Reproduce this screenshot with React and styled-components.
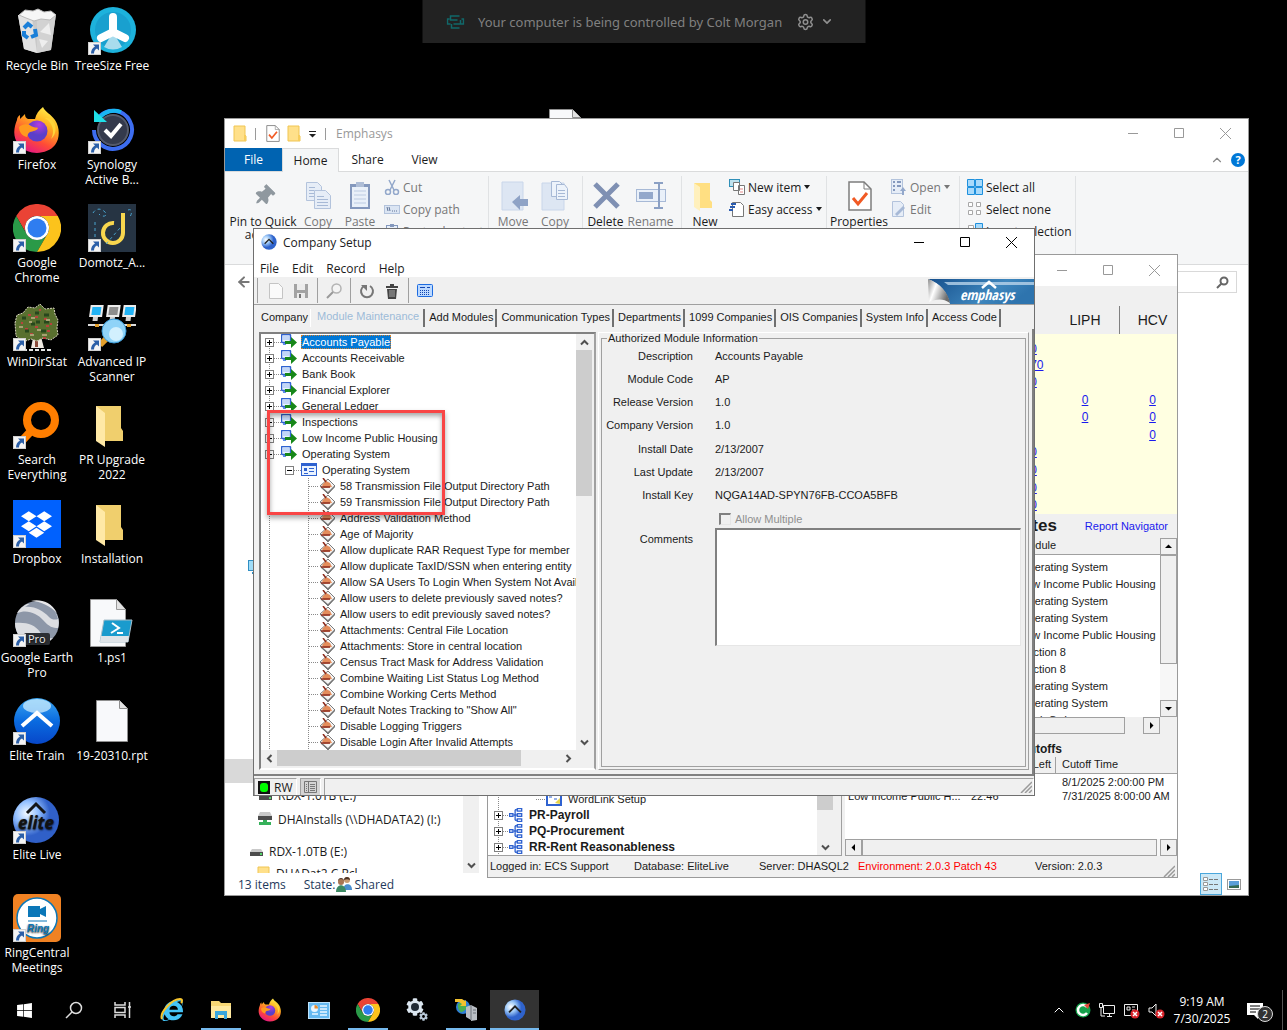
import React from "react";
import styled, { createGlobalStyle, css } from "styled-components";
import { ChevronDown, ChevronUp, Search, Settings, ArrowLeft, RotateCcw } from "lucide-react";
import {
  FaCog,
  FaDropbox,
  FaInternetExplorer,
  FaThumbtack,
  FaWindows,
} from "react-icons/fa";

const ui = `"Open Sans", "Noto Sans", sans-serif`;
const classic = `"Liberation Sans", Arial, sans-serif`;

const colors = {
  face: "#f0f0f0",
  line: "#a0a0a0",
  dark: "#808080",
  link: "#1a1aee",
  accent: "#0078d7",
  ribbon: "#f5f6f7",
};

const dots = "repeating-linear-gradient(to bottom, #8a8a8a 0 1px, transparent 1px 2px)";
const dotsX = "repeating-linear-gradient(to right, #8a8a8a 0 1px, transparent 1px 2px)";

const GlobalStyle = createGlobalStyle`
  * {
    box-sizing: border-box;
  }

  html, body, #root {
    height: 100%;
    margin: 0;
  }

  body {
    background: #000;
    font-family: ${ui};
    font-size: 12px;
    line-height: 15px;
    overflow: hidden;
  }

  svg {
    display: block;
    flex: none;
  }

  button {
    font: inherit;
    color: inherit;
    background: none;
    border: 0;
    padding: 0;
    margin: 0;
  }

  ul, dl, dd {
    margin: 0;
    padding: 0;
    list-style: none;
  }
`;

/* ---------- icons ---------- */

const Shortcut = () => (
  <g>
    <rect x="0.5" y="35.5" width="12" height="12" fill="#f4f4f4" stroke="#d0d0d0" />
    <path d="M5 37.500h6v6l-2-2c-2 1-3 2.500-3 5H3c0-3.500 1.500-5.500 4-7z" fill="#2b5fa8" />
  </g>
);

const Icon = ({ size = 48, box = 48, children }) => (
  <svg width={size} height={size} viewBox={`0 0 ${box} ${box}`} aria-hidden="true">
    {children}
  </svg>
);

const Flame = () => (
  <>
    <defs>
      <linearGradient id="flame" x1="0.8" y1="0" x2="0.3" y2="1">
        <stop offset="0" stopColor="#fff44f" />
        <stop offset="0.35" stopColor="#ffb01f" />
        <stop offset="0.7" stopColor="#ff4b36" />
        <stop offset="1" stopColor="#e31587" />
      </linearGradient>
      <radialGradient id="globe" cx="0.6" cy="0.2">
        <stop offset="0" stopColor="#b53be0" />
        <stop offset="1" stopColor="#5b3fc9" />
      </radialGradient>
    </defs>
    <path
      d="M30 1c2 5 8 7 12 13 5 8 5 18 0 25-8 10-27 11-36 0C-1 31 1 21 4 14c0-2 1-4 3-5v4l5-5c0 3 1 4 3 5h7c1-5 4-9 8-12z"
      fill="url(#flame)"
    />
    <circle cx="24" cy="25" r="10.500" fill="url(#globe)" />
    <path d="M6 21c4-4 10-3 12-1 3 2 6 1 7 2-1 3-5 3-8 4-3 2-2 4-3 5-5-1-8-5-8-10z" fill="#ff9a1f" />
    <path d="M32 12c8 5 10 14 6 21 6-5 6-14 1-19-2-2-5-2-7-2z" fill="#ffd43a" />
  </>
);

const ChromeMark = () => (
  <>
    <path d="M3.200 12A24 24 0 0 1 44.800 12H24A12 12 0 0 0 13.600 30z" fill="#ea4335" />
    <path d="M3.200 12 13.600 30A12 12 0 0 0 34.400 30L24 48A24 24 0 0 1 3.200 12z" fill="#2a9a48" />
    <path d="M44.800 12A24 24 0 0 1 24 48L34.400 30A12 12 0 0 0 24 12z" fill="#fcc31c" />
    <circle cx="24" cy="24" r="12" fill="#fff" />
    <circle cx="24" cy="24" r="9.500" fill="#2f7df0" />
  </>
);

const EliteMark = ({ arrow = "#fff" }) => (
  <>
    <defs>
      <linearGradient id="elite" x1="0" y1="0" x2="0" y2="1">
        <stop offset="0" stopColor="#3aa5f0" />
        <stop offset="0.5" stopColor="#0a6be0" />
        <stop offset="1" stopColor="#0747c9" />
      </linearGradient>
      <radialGradient id="eliteLight" cx="0.3" cy="0.35">
        <stop offset="0" stopColor="#fff" />
        <stop offset="0.5" stopColor="#9cc8f7" />
        <stop offset="1" stopColor="#2f63cc" />
      </radialGradient>
    </defs>
    <circle cx="24" cy="24" r="23" fill={arrow === "#fff" ? "url(#elite)" : "url(#eliteLight)"} />
    {arrow === "#fff" && <ellipse cx="24" cy="9" rx="14" ry="7" fill="#d9f3ff" opacity="0.7" />}
    <path d={arrow === "#fff" ? "M9 29 24 16l15 13" : "M11 29 24 16l13 13"} fill="none" stroke={arrow} strokeWidth="4" />
  </>
);

const FolderMark = () => (
  <>
    <path d="M8 5h25v22l2 3v10H16z" fill="#f0cf6d" />
    <path d="M8 5 17 12v34l-9-6z" fill="#ffe9a6" />
  </>
);

const PageMark = () => (
  <>
    <path d="M8.500 3.500h23l8 8v33h-31z" fill="#f8f9fb" stroke="#8e8e8e" />
    <path d="M31.500 3.500v8h8" fill="#e3e3e3" stroke="#8e8e8e" />
  </>
);

const drawings = {
  bin: (
    <>
      <path d="M5 8l38-1-5 36-14 3-13-4z" fill="#c9c9c9" />
      <path d="M5 8l14 3 5 35-13-4z" fill="#e2e2e2" />
      <path d="M43 7 24 11v35l14-3z" fill="#d2d2d2" />
      <path d="M6 8l6-5 8 1 5-2 6 3 7-1 5 4-6 5-9-1-7 2-8-3z" fill="#f6f6f6" stroke="#b9b9b9" />
      <path d="M27 25l9-9 2 12zM26 32l9 2-6 7z" fill="#eee" />
      <g fill="none" stroke="#1a7fd8" strokeWidth="4">
        <path d="M11 21l4-4 4 3M22 22l1 6-5 2M15 31l-4-3 0-4" />
      </g>
    </>
  ),
  tree: (
    <>
      <circle cx="25" cy="23" r="23" fill="#1db2dc" />
      <circle cx="25" cy="23" r="18" fill="#19a0cf" />
      <path d="M25 25l9 15a18 18 0 0 1-18 0z" fill="#a9dced" />
      <path d="M25 10v15l12 6M25 25l-12 6" stroke="#fff" strokeWidth="8" fill="none" strokeLinecap="round" />
    </>
  ),
  firefox: <Flame />,
  synology: (
    <>
      <circle cx="25" cy="24" r="15" fill="#343a4c" stroke="#555b6c" strokeWidth="2" />
      <path d="M12 10a19 19 0 1 1-6 14" fill="none" stroke="#3d6df0" strokeWidth="4" />
      <path d="M12 11a19 19 0 0 1 21-5" fill="none" stroke="#19b5f2" strokeWidth="4" />
      <path d="M6 4v12h13z" fill="#1fe0e8" />
      <path d="M17 24l6 6 10-12" stroke="#fff" strokeWidth="4" fill="none" />
    </>
  ),
  chrome: <ChromeMark />,
  domotz: (
    <>
      <rect width="49" height="48" fill="#263443" />
      <path d="M35 9v20a10 10 0 1 1-9-10" fill="none" stroke="#f8d64e" strokeWidth="4" />
      <g fill="none" stroke="#4aa4cf" strokeDasharray="3 3">
        <path d="M7 18v20M18 40l14-16M5 9c3-5 8-5 12-1s-3 6-6 2M40 6c5-2 4 5 1 8" />
      </g>
    </>
  ),
  windir: (
    <>
      <path d="M21 30l-3 15h13l-4-15z" fill="#efe9e2" />
      <path d="M22 30v14h3V30z" fill="#8b4a3a" />
      <path
        d="M2 20l2-8 6-2 5-6 7 1 5-4 5 5 9-1 1 6 3 6-1 8 1 7-7 5-8-2-6 3-6-2-8 3-7-6z"
        fill="#59702f"
        stroke="#d8d3c0"
        strokeDasharray="2 1"
      />
      <path d="M8 20h2m5-8h3m-6 14h3m7-12h3m6 2h3m-12 8h3m8-1h3m-19 8h3m14-3h3m-7 7h3M26 7h2m9 14h2" stroke="#b8423c" strokeWidth="2" />
      <path d="M9 15h4m9-5h4m5 2h5m-18 9h4m9-2h5m-24 9h4m12 0h5m-10-9h4" stroke="#27471c" strokeWidth="3" />
      <path d="M6 24h4m6-5h3m5 8h4m5-10h4m-20 15h4m8 0h5M18 15h4" stroke="#a7a173" strokeWidth="2" />
      <path d="M10 47h28" stroke="#e6e6e6" strokeWidth="2" strokeDasharray="4 2" />
    </>
  ),
  ipscan: (
    <>
      <g transform="skewX(-8)">
        {[3, 20, 36].map((x, i) => (
          <g key={x}>
            <rect x={x} y="2" width="13" height="12" fill="#ececec" />
            <rect x={x + 2} y="4" width="9" height="8" fill={i === 1 ? "#8d8d8d" : "#22b3f5"} />
            <path d={`M${x + 4} 14v4h5v-4z`} fill="#d0d0d0" />
          </g>
        ))}
      </g>
      <path d="M0 22h48" stroke="#ddd" strokeWidth="2" />
      <path d="M7 21h4v3H7zM39 21h4v3h-4z" fill="#e4a02c" />
      <path d="M12 42l8-8" stroke="#e4a02c" strokeWidth="6" />
      <circle cx="26" cy="28" r="12" fill="#8fd3f8" stroke="#3b9ad6" />
      <circle cx="28" cy="31" r="7" fill="#d2f0fe" />
    </>
  ),
  everything: (
    <>
      <circle cx="28" cy="19" r="14" fill="none" stroke="#ff7e00" strokeWidth="8" />
      <path d="M19 29 6 43" stroke="#ff7e00" strokeWidth="8" />
    </>
  ),
  folder: <FolderMark />,
  dropbox: (
    <>
      <rect width="48" height="48" fill="#0061fe" />
      <FaDropbox x="8" y="9" size={31} color="#fff" />
    </>
  ),
  earth: (
    <>
      <circle cx="24" cy="24" r="22" fill="#8d97a8" />
      <path d="M4 14c10-4 20 0 26 7s10 8 15 8c2-7 0-12-3-16-6-3-15-8-28-8-4 2-8 5-10 9z" fill="#dcdee2" />
      <path d="M2 24c12-1 20 2 25 9 4 6 9 7 13 6-5 6-14 8-22 6C8 42 2 34 2 24z" fill="#dcdee2" />
      <path d="M12 8c10-1 18 4 24 10 3 3 6 3 9 2-2-9-10-18-21-18-4 1-8 3-12 6z" fill="#8d97a8" />
      <path d="M18 2c10 0 20 6 26 12C38 2 26 0 18 2z" fill="#e8e8ea" />
      <rect x="11" y="34" width="26" height="12" rx="2" fill="#2b2e33" />
      <text x="15" y="44" fontSize="11" fontFamily="Open Sans" fill="#eee">Pro</text>
    </>
  ),
  script: (
    <>
      <path d="M2.500 0.500h26l9 10v37h-35z" fill="#f8f9fb" stroke="#9a9a9a" />
      <path d="M28.500 0.500v10h9" fill="#e3e3e3" stroke="#9a9a9a" />
      <path d="M16 21h28l-4 22H12z" fill="#1a9bcd" stroke="#a9bfca" />
      <path d="M13 37h28l-1 6H12z" fill="#dfe4e8" />
      <path d="M24 24l7 5-8 5m6 0h6" fill="none" stroke="#fff" strokeWidth="2" />
    </>
  ),
  train: <EliteMark />,
  page: <PageMark />,
  live: (
    <>
      <defs>
        <radialGradient id="liveBall" cx="0.3" cy="0.35">
          <stop offset="0" stopColor="#f3faff" />
          <stop offset="0.5" stopColor="#93c0ff" />
          <stop offset="1" stopColor="#3060c8" />
        </radialGradient>
      </defs>
      <circle cx="23" cy="24" r="23" fill="url(#liveBall)" />
      <path d="M14 17l9-9 9 9" fill="none" stroke="#141414" strokeWidth="3" />
      <text x="5" y="33" fontSize="17" fontWeight="700" fontStyle="italic" fontFamily="Open Sans" fill="#111">elite</text>
    </>
  ),
  ring: (
    <>
      <rect width="48" height="48" rx="5" fill="#f08223" />
      <circle cx="24" cy="24" r="20" fill="#fff" stroke="#0b77b8" strokeWidth="1.500" />
      <path d="M15 12h12v3l6-3v11l-6-3v3H15z" fill="#0b77b8" />
      <path d="M15 27h19" stroke="#0b77b8" />
      <text x="14" y="38" fontSize="10" fontWeight="700" fontStyle="italic" fontFamily="Liberation Sans" fill="#0b77b8">Ring</text>
    </>
  ),
};

const SmallFolder = () => (
  <svg width="14" height="17" viewBox="0 0 14 17" aria-hidden="true">
    <path d="M1 1h11v9l1 1v5H1z" fill="#ffe08a" stroke="#f0c552" />
    <path d="M11 10h2v6h-2z" fill="#f7cd5c" />
  </svg>
);

const CheckPage = ({ w = 14, h = 17 }) => (
  <svg width={w} height={h} viewBox="0 0 24 30" aria-hidden="true">
    <path d="M1 1h15l7 7v21H1z" fill="#fff" stroke="#7d7d7d" strokeWidth="1.500" />
    <path d="M16 1v7h7" fill="none" stroke="#7d7d7d" />
    <path d="M5 17l5 6 9-11" fill="none" stroke="#f15a24" strokeWidth="3" />
  </svg>
);

const ribbonIcons = {
  pin: (
    <g transform="rotate(45 16 16)">
      <FaThumbtack x="6" y="5" size={21} color="#8f989f" />
    </g>
  ),
  copy: (
    <g fill="#e6edf7" stroke="#b3c3dc">
      <path d="M4.500 2.500h11l4 4v14h-15z" />
      <path d="M12.500 10.500h11l5 5v13h-16z" />
      <path d="M7 7.500h6m-6 3h5m-5 3h5m-5 3h5M15 16.500h7m-7 3h11m-11 3h11m-11 3h11" fill="none" stroke="#a7b9d6" />
    </g>
  ),
  paste: (
    <g>
      <rect x="6" y="4" width="20" height="25" fill="#8498bd" />
      <rect x="8" y="7" width="16" height="20" fill="#e9f0f9" />
      <path d="M12 2h8v5h-8z" fill="#aebdd6" />
      <path d="M10 11h12m-12 4h12m-12 4h12m-12 4h12" stroke="#bccbe2" />
    </g>
  ),
  move: (
    <g>
      <path d="M5 2h21v28H5z" fill="#dde6f3" stroke="#c9d6ea" />
      <path d="M15 22l8-7v4h8v7h-8v4z" fill="#8fa3c6" />
    </g>
  ),
  copyTo: (
    <g>
      <path d="M3 3h22v27H3z" fill="#dde6f3" stroke="#c9d6ea" />
      <path d="M12.500 1.500h8l3 3v12h-11z" fill="#edf3fb" stroke="#a7b9d6" />
      <path d="M17.500 4.500h8l3 4v11h-11z" fill="#edf3fb" stroke="#a7b9d6" />
      <path d="M19 10.500h7m-7 3h7m-7 3h7" stroke="#a7b9d6" />
    </g>
  ),
  del: <path d="M5 4l23 23M28 4 5 27" stroke="#7f90b3" strokeWidth="5" fill="none" />,
  rename: (
    <g fill="none">
      <rect x="1.500" y="9.500" width="29" height="12" fill="#e9f0f9" stroke="#a7b9d6" />
      <rect x="4" y="12" width="14" height="7" fill="#93a8cb" />
      <path d="M19 3h9M24 3v25M19 28h9" stroke="#8ba0c4" strokeWidth="2" />
    </g>
  ),
  folder: (
    <g>
      <path d="M5 3h16v17l2 2v6H10z" fill="#ffdf82" />
      <path d="M5 3l6 4v24l-6-4z" fill="#fff0bd" />
    </g>
  ),
};

const smallIcons = {
  cut: (
    <g fill="none" stroke="#93a8cb" strokeWidth="1.500">
      <path d="M5 1l5 10M11 1 6 11" />
      <circle cx="4" cy="13" r="2.500" />
      <circle cx="12" cy="13" r="2.500" />
    </g>
  ),
  path: (
    <g>
      <rect x="0.5" y="4.500" width="15" height="8" fill="#dbe5f3" stroke="#b3c3dc" />
      <path d="M3 6l1 4M5 6l1 4m2 0h1m1 0h1m1 0h1" stroke="#5f7397" fill="none" />
    </g>
  ),
  clip: (
    <g>
      <rect x="2.500" y="2.500" width="11" height="13" fill="#e9f0f9" stroke="#8498bd" />
      <path d="M6 1h4v3H6z" fill="#8498bd" />
    </g>
  ),
  item: (
    <g fill="#fff" stroke="#777">
      <rect x="0.500" y="0.500" width="10" height="7" stroke="#2f8fb8" fill="#bfe2ee" />
      <path d="M4.500 3.500h6v8h-6zM9.500 6.500h6v9h-6z" />
      <path d="M11 10h3m-3 3h3" stroke="#e58b8b" />
    </g>
  ),
  access: (
    <g fill="none">
      <path d="M3.500 1.500h8l3 3v11h-11z" fill="#fff" stroke="#777" />
      <path d="M2 3h5M1 6h5M0 9h4" stroke="#2a5cb0" strokeWidth="2" />
    </g>
  ),
  open: (
    <g>
      <rect x="0.500" y="0.500" width="11" height="14" fill="#e6edf7" stroke="#b3c3dc" />
      <path d="M2 3h2m2 0h4M2 7h2m2 0h4M2 11h2" stroke="#8498bd" strokeWidth="2" />
      <path d="M11 16v-4H9l3-4 3 4h-2v4z" fill="#93a8cb" />
    </g>
  ),
  edit: (
    <g>
      <path d="M1.500 0.500h8l3 3v12h-11z" fill="#e6edf7" stroke="#b3c3dc" />
      <path d="M4 13l8-8 2 2-8 8z" fill="#a7b9d6" />
    </g>
  ),
  all: (
    <g fill="#a8dafb" stroke="#1e90dd">
      <path d="M0.500 0.500h7v7h-7zM8.500 0.500h7v7h-7zM0.500 8.500h7v7h-7zM8.500 8.500h7v7h-7z" />
    </g>
  ),
  none: (
    <g fill="#fff" stroke="#a8a8a8">
      <path d="M1.500 1.500h4v4h-4zM9.500 1.500h4v4h-4zM1.500 9.500h4v4h-4zM9.500 9.500h4v4h-4z" />
    </g>
  ),
  invert: (
    <g>
      <path d="M1.500 2.500h5v5h-5z" fill="#fff" stroke="#a8a8a8" />
      <path d="M8.500 0.500h7v7h-7z" fill="#a8dafb" stroke="#1e90dd" />
    </g>
  ),
  drive: (
    <g>
      <path d="M4 6h9l2 3H2z" fill="#c9c9c9" />
      <rect x="2" y="9" width="13" height="4" fill="#4c4c4c" />
      <rect x="12" y="10" width="2" height="2" fill="#54d36a" />
    </g>
  ),
  netDrive: (
    <g>
      <path d="M3 1h10l2 4H1z" fill="#c9c9c9" />
      <rect x="1" y="5" width="14" height="4" fill="#4c4c4c" />
      <path d="M6 9h4v2h4v3H2v-3h4z" fill="#35b15a" />
    </g>
  ),
  pc: (
    <g>
      <rect x="0.500" y="1.500" width="15" height="10" fill="#9fdcf8" stroke="#2f8fc4" />
      <path d="M4 14h8" stroke="#2f8fc4" strokeWidth="2" />
    </g>
  ),
  module: (
    <g>
      <rect x="0.500" y="0.500" width="9" height="8" rx="1" fill="#e8f2ff" stroke="#2f62d0" strokeWidth="1.500" />
      <path d="M2 3h6M2 5h6" stroke="#9dbcf0" />
      <path d="M2 9h3v2H2z" fill="#5d8be8" />
      <path d="M4 7h6V3l6 5.500-6 5.500v-4H4z" fill="#17871a" />
    </g>
  ),
  form: (
    <g>
      <rect x="0.500" y="1.500" width="15" height="12" fill="#eaf3ff" stroke="#2f62d0" />
      <path d="M1 3h14" stroke="#2f62d0" strokeWidth="2" />
      <path d="M3 6h3v3H3z" fill="#2f62d0" />
      <path d="M8 6.500h5M8 9.500h5M3 11.500h4" stroke="#2f62d0" />
    </g>
  ),
  pref: (
    <g>
      <path d="M1 8l8-7 7 7-7 8z" fill="#f5f5f5" stroke="#7b7b7b" />
      <path d="M2 9l7 6 7-7" stroke="#777" strokeWidth="1.500" fill="none" />
      <path d="M3 7l4-4 4 2 2 4-8 1z" fill="#e38d5c" />
      <path d="M4 0l3 4M2 9h9" stroke="#8d2b1c" strokeWidth="1.500" />
    </g>
  ),
  nodes: (
    <g fill="#dbe6fb" stroke="#2f62d0" strokeWidth="1.500">
      <path d="M0.500 6.500h4v3h-4zM9.500 0.500h5v3h-5zM9.500 6.500h5v3h-5zM9.500 12.500h5v3h-5z" />
      <path d="M5 8h4M7 2v12M7 2h2M7 14h2" fill="none" />
    </g>
  ),
  link: (
    <g>
      <rect x="1" y="1" width="14" height="13" fill="#fff" stroke="#2f62d0" strokeWidth="2" />
      <path d="M9 12l5-5v6z" fill="#e8d44a" />
      <path d="M3 6h3m2 2h3" stroke="#2f62d0" />
    </g>
  ),
};

const Small = ({ name, size = 16 }) => (
  <Icon size={size} box={16}>
    {smallIcons[name]}
  </Icon>
);

/* ---------- desktop ---------- */

const Screen = styled.div`
  height: 100%;
  display: flex;
  flex-direction: column;
  background: #000;
`;

const Desktop = styled.main`
  flex: 1;
  min-height: 0;
  position: relative;
  overflow: hidden;
`;

const IconGrid = styled.div`
  height: 100%;
  padding-bottom: 4px;
  display: grid;
  grid-template-columns: 74px 76px;
  grid-template-rows: repeat(10, 1fr);
  grid-auto-flow: column;
`;

const DesktopIcon = styled.button`
  display: flex;
  flex-direction: column;
  align-items: center;
  justify-content: flex-start;
  gap: 3px;
  padding-top: 7px;
  color: #fff;
  text-align: center;
  text-shadow: 0 1px 2px #000;
  min-height: 0;
  white-space: pre;
`;

const desktopIcons = [
  ["bin", "Recycle Bin", false],
  ["firefox", "Firefox", true],
  ["chrome", "Google\nChrome", true],
  ["windir", "WinDirStat", true],
  ["everything", "Search\nEverything", true],
  ["dropbox", "Dropbox", true],
  ["earth", "Google Earth\nPro", true],
  ["train", "Elite Train", true],
  ["live", "Elite Live", true],
  ["ring", "RingCentral\nMeetings", true],
  ["tree", "TreeSize Free", true],
  ["synology", "Synology\nActive B...", true],
  ["domotz", "Domotz_A...", true],
  ["ipscan", "Advanced IP\nScanner", true],
  ["folder", "PR Upgrade\n2022", false],
  ["folder", "Installation", false],
  ["script", "1.ps1", false],
  ["page", "19-20310.rpt", false],
];

const LooseFile = styled.div`
  position: absolute;
  left: 541px;
  top: 106px;
`;

const Banner = styled.div`
  position: absolute;
  top: 0;
  left: 50%;
  transform: translateX(-50%);
  width: 443px;
  height: 43px;
  display: flex;
  align-items: center;
  gap: 14px;
  padding: 0 24px;
  background: #222;
  color: #808080;
  font-family: "Noto Sans", sans-serif;
  font-size: 13px;
  line-height: 20px;
  white-space: nowrap;
`;

const BannerTools = styled.button`
  display: flex;
  align-items: center;
  gap: 6px;
  color: #8f8f8f;
`;

const Marker = styled.div`
  position: absolute;
  left: 267px;
  top: 410px;
  width: 178px;
  height: 105px;
  border: 3px solid #f94545;
  box-shadow: 0 3px 5px rgba(0, 0, 0, 0.35), inset 0 3px 5px rgba(0, 0, 0, 0.35);
`;

/* ---------- windows ---------- */

const Window = styled.section`
  position: absolute;
  left: ${(p) => p.$x}px;
  top: ${(p) => p.$y}px;
  width: ${(p) => p.$w}px;
  height: ${(p) => p.$h}px;
  display: flex;
  flex-direction: column;
  background: #fff;
  border: 1px solid ${(p) => p.$edge || "#9a9a9a"};
  color: #1b1b1b;
`;

const TitleBar = styled.header`
  height: ${(p) => p.$h || 26}px;
  flex: none;
  display: flex;
  align-items: center;
  gap: 6px;
  padding-left: 7px;
`;

const Controls = styled.div`
  display: flex;
  margin-left: auto;
  align-self: stretch;
  color: ${(p) => (p.$dim ? "#999" : "#000")};

  button {
    width: 46px;
    display: flex;
    align-items: center;
    justify-content: center;
  }
`;

const WindowControls = ({ dim }) => (
  <Controls $dim={dim}>
    <button aria-label="Minimize">
      <svg width="11" height="11"><path d="M0 5.500h10" stroke="currentColor" /></svg>
    </button>
    <button aria-label="Maximize">
      <svg width="11" height="11"><path d="M0.500 0.500h9v9h-9z" fill="none" stroke="currentColor" /></svg>
    </button>
    <button aria-label="Close">
      <svg width="11" height="11"><path d="M0 0l11 11M11 0 0 11" stroke="currentColor" /></svg>
    </button>
  </Controls>
);

/* explorer */

const Rule = styled.span`
  width: 1px;
  height: 12px;
  background: #9a9a9a;
  margin: 0 3px 0 1px;
`;

const Caret = styled.span`
  border: 3px solid transparent;
  border-top: 4px solid currentColor;
  border-bottom: 0;
`;

const QuickBar = styled.div`
  display: flex;
  align-items: center;
  gap: 7px;
  padding-left: 1px;
  color: #999;
`;

const RibbonTabs = styled.nav`
  height: 24px;
  flex: none;
  display: flex;
  align-items: stretch;
  border-bottom: 1px solid #dadbdc;
`;

const RibbonTab = styled.button`
  width: 57px;
  ${(p) => p.$file && css`
    background: #0063b1;
    color: #fff;
  `}
  ${(p) => p.$active && css`
    background: ${colors.ribbon};
    border: 1px solid #dadbdc;
    border-bottom: 0;
    margin-bottom: -1px;
  `}
`;

const HelpCorner = styled.div`
  margin-left: auto;
  display: flex;
  align-items: center;
  gap: 7px;
  padding-right: 3px;
  color: #888;
`;

const Help = styled.button`
  width: 14px;
  height: 14px;
  border-radius: 50%;
  background: ${colors.accent};
  color: #fff;
  font-size: 11px;
  font-weight: 700;
  line-height: 14px;
`;

const Ribbon = styled.div`
  height: 93px;
  flex: none;
  display: flex;
  background: ${colors.ribbon};
  border-bottom: 1px solid #dadbdc;
`;

const Group = styled.div`
  width: ${(p) => p.$w}px;
  margin: 4px 0 3px;
  padding-left: ${(p) => p.$pad}px;
  border-right: 1px solid #e0e2e4;
  display: flex;
  overflow: hidden;
`;

const Big = styled.button`
  width: ${(p) => p.$w || 42}px;
  flex: none;
  display: flex;
  flex-direction: column;
  align-items: center;
  gap: 3px;
  padding-top: 4px;
  line-height: 13px;
  color: ${(p) => (p.$off ? "#777" : "#1b1b1b")};
  white-space: pre;
`;

const SmallStack = styled.div`
  display: flex;
  flex-direction: column;
  padding-left: 3px;
`;

const SmallButton = styled.button`
  height: 22px;
  display: flex;
  align-items: center;
  gap: 3px;
  white-space: nowrap;
  color: ${(p) => (p.$off ? "#777" : "#1b1b1b")};
`;

const AddressRow = styled.div`
  height: 34px;
  flex: none;
  display: flex;
  align-items: center;
  justify-content: space-between;
  padding: 0 11px;
  color: #777;
`;

const SearchBox = styled.div`
  width: 220px;
  height: 22px;
  border: 1px solid #d9d9d9;
  display: flex;
  align-items: center;
  padding-right: 7px;

  input {
    flex: 1;
    border: 0;
    outline: 0;
    min-width: 0;
  }
`;

const NavPane = styled.div`
  flex: 1;
  min-height: 0;
  width: 254px;
  display: flex;
`;

const NavList = styled.ul`
  flex: 1;
  overflow: hidden;
  display: flex;
  flex-direction: column;
  justify-content: flex-end;
`;

const NavItem = styled.li`
  height: 24px;
  flex: none;
  display: flex;
  align-items: center;
  gap: 5px;
  padding-left: ${(p) => (p.$root ? 23 : 32)}px;
  margin-bottom: ${(p) => p.$after || 0}px;
  background: ${(p) => (p.$selected ? "#d9d9d9" : "none")};
  ${(p) => p.$cut && css`
    height: 10px;
    align-items: flex-start;
    padding-top: 3px;
    overflow: hidden;
  `}
`;

const ExplorerStatus = styled.footer`
  height: 22px;
  flex: none;
  display: flex;
  align-items: center;
  padding-left: 13px;
  color: #1e395b;

  span {
    margin-right: 18px;
  }
`;

const Shared = styled.div`
  display: flex;
  align-items: center;
  gap: 1px;
`;

const ViewButton = styled.button`
  width: ${(p) => (p.$on ? 22 : 24)}px;
  height: 22px;
  display: flex;
  align-items: center;
  justify-content: center;
  margin-left: ${(p) => (p.$on ? "auto" : "0")};
  margin-right: ${(p) => (p.$on ? 0 : 2)}px;
  background: ${(p) => (p.$on ? "#cce8f6" : "none")};
  border: ${(p) => (p.$on ? "1px solid #4aa7dc" : 0)};
`;

const Explorer = () => (
  <Window $x={224} $y={118} $w={1025} $h={778}>
    <TitleBar $h={29}>
      <QuickBar>
        <SmallFolder />
        <Rule />
        <CheckPage />
        <SmallFolder />
        <svg width="9" height="8"><path d="M1 1.500h7" stroke="#222" /><path d="M1 4h7L4.500 7.500z" fill="#222" /></svg>
        <Rule />
        Emphasys
      </QuickBar>
      <WindowControls dim />
    </TitleBar>
    <RibbonTabs>
      <RibbonTab $file>File</RibbonTab>
      <RibbonTab $active>Home</RibbonTab>
      <RibbonTab>Share</RibbonTab>
      <RibbonTab>View</RibbonTab>
      <HelpCorner>
        <ChevronUp size={14} strokeWidth={2} />
        <Help aria-label="Help">?</Help>
      </HelpCorner>
    </RibbonTabs>
    <Ribbon>
      <Group $w={264} $pad={4}>
        <Big $w={68}><Icon size={32} box={32}>{ribbonIcons.pin}</Icon>{"Pin to Quick\naccess"}</Big>
        <Big $off><Icon size={32} box={32}>{ribbonIcons.copy}</Icon>Copy</Big>
        <Big $off><Icon size={32} box={32}>{ribbonIcons.paste}</Icon>Paste</Big>
        <SmallStack>
          <SmallButton $off><Small name="cut" />Cut</SmallButton>
          <SmallButton $off><Small name="path" />Copy path</SmallButton>
          <SmallButton $off><Small name="clip" />Paste shortcut</SmallButton>
        </SmallStack>
      </Group>
      <Group $w={94} $pad={3}>
        <Big $off><Icon size={32} box={32}>{ribbonIcons.move}</Icon>Move</Big>
        <Big $off><Icon size={32} box={32}>{ribbonIcons.copyTo}</Icon>Copy</Big>
      </Group>
      <Group $w={99} $pad={0}>
        <Big $w={45}><Icon size={32} box={32}>{ribbonIcons.del}</Icon>Delete</Big>
        <Big $w={45} $off><Icon size={32} box={32}>{ribbonIcons.rename}</Icon>Rename</Big>
      </Group>
      <Group $w={145} $pad={2}>
        <Big><Icon size={32} box={32}>{ribbonIcons.folder}</Icon>New</Big>
        <SmallStack>
          <SmallButton><Small name="item" />New item <Caret /></SmallButton>
          <SmallButton><Small name="access" />Easy access <Caret /></SmallButton>
        </SmallStack>
      </Group>
      <Group $w={133} $pad={3}>
        <Big $w={58}><Icon size={32} box={32}><svg x="5" y="1" width="24" height="30"><CheckPage w={24} h={30} /></svg></Icon>Properties</Big>
        <SmallStack>
          <SmallButton $off><Small name="open" />Open <Caret /></SmallButton>
          <SmallButton $off><Small name="edit" />Edit</SmallButton>
        </SmallStack>
      </Group>
      <Group $w={116} $pad={4}>
        <SmallStack>
          <SmallButton><Small name="all" />Select all</SmallButton>
          <SmallButton><Small name="none" />Select none</SmallButton>
          <SmallButton><Small name="invert" />Invert selection</SmallButton>
        </SmallStack>
      </Group>
    </Ribbon>
    <AddressRow>
      <ArrowLeft size={16} strokeWidth={3} />
      <SearchBox>
        <input aria-label="Search Emphasys" />
        <svg width="13" height="13" aria-hidden="true">
          <circle cx="8" cy="5" r="3.500" fill="none" stroke="#666" strokeWidth="2" />
          <path d="M5.500 7.500 1 12" stroke="#666" strokeWidth="2" />
        </svg>
      </SearchBox>
    </AddressRow>
    <NavPane>
      <NavList>
        <NavItem $root $after={180}><Small name="pc" /></NavItem>
        <NavItem $selected />
        <NavItem><Small name="drive" />RDX-1.0TB (E:)</NavItem>
        <NavItem $after={8}><Small name="netDrive" />DHAInstalls (\\DHADATA2) (I:)</NavItem>
        <NavItem $root><Small name="drive" />RDX-1.0TB (E:)</NavItem>
        <NavItem $cut><SmallFolder />DHADat2 C Rcl</NavItem>
      </NavList>
      <VBar />
    </NavPane>
    <ExplorerStatus>
      <span>13 items</span>
      <Shared>
        State:
        <svg width="17" height="16" viewBox="0 0 17 16" aria-hidden="true">
          <circle cx="11" cy="4" r="3" fill="#c79a72" />
          <path d="M7 14c0-7 9-8 9 0z" fill="#4b8fd0" />
          <path d="M8 4c0-4 6-4 6 0-2-1-4-1-6 0zM2 5c0-4 6-4 6 0-2-1-4-1-6 0z" fill="#4a3225" />
          <circle cx="5" cy="6" r="3" fill="#a87654" />
          <path d="M0 16c0-9 10-9 10 0z" fill="#3d8a63" />
        </svg>
        Shared
      </Shared>
      <ViewButton $on aria-label="Details">
        <svg width="16" height="14">
          <path d="M0.500 0.500h4v3h-4zM0.500 5.500h4v3h-4zM0.500 10.500h4v3h-4z" fill="#fff" stroke="#999" />
          <path d="M6 2.500h4m1 0h4M6 7.500h4m1 0h4M6 12.500h4m1 0h4" stroke="#777" />
        </svg>
      </ViewButton>
      <ViewButton aria-label="Large icons">
        <svg width="14" height="11">
          <rect x="0.500" y="0.500" width="13" height="10" fill="#fff" stroke="#999" />
          <rect x="2" y="2" width="10" height="7" fill="#5b9fd8" />
          <path d="M2 7l10-1v3H2z" fill="#356b52" />
        </svg>
      </ViewButton>
    </ExplorerStatus>
  </Window>
);

/* scroll bars */

const VTrack = styled.div`
  width: 16px;
  flex: none;
  display: flex;
  flex-direction: column;
  justify-content: space-between;
  align-items: center;
  background: ${colors.face};
`;

const VThumb = styled.div`
  width: 16px;
  height: ${(p) => p.$h}px;
  background: #cdcdcd;
  margin-bottom: auto;
`;

const HTrack = styled.div`
  height: 16px;
  flex: none;
  display: flex;
  align-items: center;
  background: ${colors.face};
`;

const HThumb = styled.div`
  width: ${(p) => p.$w}px;
  height: 16px;
  background: #cdcdcd;
  margin-right: auto;
`;

const ArrowBox = styled.button`
  width: 16px;
  height: 16px;
  flex: none;
  display: flex;
  align-items: center;
  justify-content: center;
`;

const turns = { up: 180, down: 0, left: 90, right: 270 };

const Arrow = ({ to }) => (
  <ArrowBox aria-label={`Scroll ${to}`}>
    <svg width="9" height="9" viewBox="0 0 9 9">
      <path d="M1 2.500l3.500 3.500L8 2.500" transform={`rotate(${turns[to]} 4.500 4.500)`} fill="none" stroke="#505050" strokeWidth="2" />
    </svg>
  </ArrowBox>
);

const VBar = ({ thumb }) => (
  <VTrack>
    {thumb ? <Arrow to="up" /> : <span />}
    {thumb ? <VThumb $h={thumb} /> : null}
    <Arrow to="down" />
  </VTrack>
);

const FlatButton = styled.button`
  width: 17px;
  height: 17px;
  flex: none;
  border: 1px solid ${colors.line};
  background: ${colors.face};
  display: flex;
  align-items: center;
  justify-content: center;
`;

const Flat = ({ to }) => (
  <FlatButton aria-label={`Scroll ${to}`}>
    <svg width="7" height="7" viewBox="0 0 7 7">
      <path d="M0 2h7L3.500 5.500z" transform={`rotate(${turns[to]} 3.500 3.500)`} fill="#000" />
    </svg>
  </FlatButton>
);

const FlatTrack = styled.div`
  flex: none;
  display: flex;
  flex-direction: ${(p) => (p.$vertical ? "column" : "row")};
  padding-right: ${(p) => p.$end || 0}px;
  background: ${(p) => (p.$end ? colors.face : "#f7f7f7")};
`;

const FlatThumb = styled.div`
  border: 1px solid ${colors.line};
  background: ${colors.face};
  ${(p) => (p.$h ? `height: ${p.$h}px; margin-bottom: auto;` : `margin-right: ${p.$rest}px; flex: 1;`)}
`;

/* elite main window */

const Split = styled.div`
  flex: 1;
  min-height: 0;
  display: flex;
  background: ${colors.face};
  font-family: ${classic};
  font-size: 11px;
  line-height: 14px;
`;

const LeftTree = styled.div`
  width: 354px;
  flex: none;
  margin-right: 3px;
  padding-right: 8px;
  display: flex;
  border: 1px solid ${colors.line};
  border-left: 0;
`;

const Branches = styled.ul`
  flex: 1;
  background: ${dots} 10px 0 / 1px 100% no-repeat #fff;
  display: flex;
  flex-direction: column;
  justify-content: flex-end;
`;

const Branch = styled.li`
  height: 16px;
  display: flex;
  align-items: center;
  padding-left: ${(p) => (p.$deep ? 48 : 6)}px;
  font-size: ${(p) => (p.$deep ? 11 : 12)}px;
  font-weight: ${(p) => (p.$deep ? 400 : 700)};
`;

const PlusBox = styled.span`
  width: 9px;
  height: 9px;
  flex: none;
  border: 1px solid #808080;
  background:
    linear-gradient(#000, #000) center / 5px 1px no-repeat,
    ${(p) => (p.$open ? "" : "linear-gradient(#000, #000) center / 1px 5px no-repeat,")}
    linear-gradient(#fff, #fff);
`;

const Dash = styled.span`
  width: ${(p) => p.$w}px;
  height: 1px;
  flex: none;
  background: ${dotsX};
`;

const BranchLabel = styled.span`
  margin-left: 6px;
`;

const Right = styled.div`
  flex: 1;
  min-width: 0;
  display: flex;
  flex-direction: column;
`;

const Counts = styled.table`
  border-collapse: collapse;
  width: 100%;
  table-layout: fixed;
  text-align: center;
  background: #ffffe1;
  height: 228px;
  font-size: 12px;

  th {
    height: 48px;
    padding: 20px 0 0;
    font-weight: 400;
    font-size: 14px;
    background: ${colors.face};
  }

  th:last-child {
    background: linear-gradient(#808080, #808080) 0 20px / 1px 28px no-repeat ${colors.face};
  }

  td {
    height: 17px;
    padding: 0;
  }

  td:last-child, th:last-child {
    padding-left: 9px;
  }

  tbody tr:first-child td {
    height: 21px;
    vertical-align: bottom;
  }

  a {
    color: ${colors.link};
  }
`;

const NotesHead = styled.div`
  height: 24px;
  flex: none;
  display: flex;
  align-items: center;
  justify-content: flex-end;
  gap: 28px;
  padding-right: 9px;

  h2 {
    margin: 0;
    font-size: 17px;
  }

  a {
    color: ${colors.link};
    text-decoration: none;
  }
`;

const NotesList = styled.div`
  height: 179px;
  flex: none;
  display: flex;
  overflow: hidden;
  background: #fff;
`;

const Rows = styled.table`
  border-collapse: collapse;
  width: 100%;
  table-layout: fixed;

  th {
    height: 16px;
    padding: 0;
    text-align: left;
    font-weight: 400;
    line-height: 13px;
    background: ${colors.face};
    border-bottom: 1px solid ${colors.line};
  }

  td {
    height: ${(p) => p.$row}px;
    padding: 0;
    white-space: nowrap;
  }

  tbody::before {
    content: "";
    display: block;
    height: ${(p) => p.$lead}px;
  }
`;

const LeftHead = styled.th`
  && {
    padding-right: 11px;
    text-align: right;
    background: linear-gradient(${colors.line}, ${colors.line}) calc(100% - 6px) 0 / 1px 100% no-repeat ${colors.face};
  }
`;

const TableClip = styled.div`
  flex: 1;
  min-width: 0;
  min-height: 0;
  overflow: hidden;
  background: #fff;
`;

const CutTitle = styled.h3`
  margin: 0;
  height: 23px;
  flex: none;
  padding: 8px 0 0 175px;
  font-size: 12px;
  line-height: 14px;
`;

const EliteStatus = styled.footer`
  height: 21px;
  flex: none;
  display: grid;
  grid-template-columns: 144px 125px 99px 177px 1fr 14px;
  align-items: center;
  padding-left: 2px;
  background: ${colors.face};
  font-family: ${classic};
  font-size: 11px;
  white-space: nowrap;

  svg {
    align-self: end;
  }
`;

const Alert = styled.span`
  color: #f00;
`;

const Grip = () => (
  <svg width="12" height="12" aria-hidden="true">
    <path d="M1 12 12 1M5 12l7-7M9 12l3-3" stroke="#9a9a9a" strokeWidth="1.500" fill="none" />
  </svg>
);

const counts = [
  ["0"], ["170"], ["0"], ["", "0", "0"], ["", "0", "0"], ["", "", "0"], ["0"], ["0"], ["0"], ["0"],
];

const noteModules = [
  "Operating System",
  "Low Income Public Housing",
  "Operating System",
  "Operating System",
  "Low Income Public Housing",
  "Section 8",
  "Section 8",
  "Operating System",
  "Operating System",
  "Work Orders",
];

const Elite = () => (
  <Window $x={487} $y={254} $w={691} $h={624}>
    <TitleBar $h={31}>
      <WindowControls dim />
    </TitleBar>
    <Split>
      <LeftTree>
        <Branches>
          <Branch $deep><Dash $w={10} /><Small name="link" /><BranchLabel>WordLink Setup</BranchLabel></Branch>
          {["PR-Payroll", "PQ-Procurement", "RR-Rent Reasonableness"].map((name) => (
            <Branch key={name}>
              <PlusBox /><Dash $w={6} /><Small name="nodes" size={14} /><BranchLabel>{name}</BranchLabel>
            </Branch>
          ))}
        </Branches>
        <VBar thumb={507} />
      </LeftTree>
      <Right>
        <Counts>
          <colgroup>
            <col /><col style={{ width: 35 }} /><col style={{ width: 68 }} /><col style={{ width: 58 }} />
          </colgroup>
          <thead>
            <tr><th /><th /><th>LIPH</th><th>HCV</th></tr>
          </thead>
          <tbody>
            {counts.map((row, i) => (
              <tr key={i}>
                <td />
                {[0, 1, 2].map((n) => (
                  <td key={n}>{row[n] ? <a href="#count">{row[n]}</a> : null}</td>
                ))}
              </tr>
            ))}
          </tbody>
        </Counts>
        <NotesHead>
          <h2>Notes</h2>
          <a href="#reports">Report Navigator</a>
        </NotesHead>
        <NotesList>
          <TableClip>
            <Rows $row={17} $lead={4}>
              <colgroup><col style={{ width: 175 }} /><col /></colgroup>
              <thead><tr><th /><th>Module</th></tr></thead>
              <tbody>
                {noteModules.map((name, i) => (
                  <tr key={i}><td /><td>{name}</td></tr>
                ))}
              </tbody>
            </Rows>
          </TableClip>
          <FlatTrack $vertical>
            <Flat to="up" />
            <FlatThumb $h={109} />
            <Flat to="down" />
          </FlatTrack>
        </NotesList>
        <FlatTrack $end={17}>
          <FlatThumb $rest={18} />
          <Flat to="right" />
        </FlatTrack>
        <CutTitle>Cutoffs</CutTitle>
        <TableClip>
          <Rows $row={14} $lead={1}>
            <colgroup><col style={{ width: 126 }} /><col style={{ width: 91 }} /><col /></colgroup>
            <thead><tr><th /><LeftHead>Left</LeftHead><th>Cutoff Time</th></tr></thead>
            <tbody>
              <tr><td /><td /><td>8/1/2025 2:00:00 PM</td></tr>
              <tr><td>&nbsp;Low Income Public H...</td><td>22:46</td><td>7/31/2025 8:00:00 AM</td></tr>
            </tbody>
          </Rows>
        </TableClip>
        <FlatTrack>
          <Flat to="left" />
          <FlatThumb $rest={3} />
          <Flat to="right" />
        </FlatTrack>
      </Right>
    </Split>
    <EliteStatus>
      <span>Logged in: ECS Support</span>
      <span>Database: EliteLive</span>
      <span>Server: DHASQL2</span>
      <Alert>Environment: 2.0.3 Patch 43</Alert>
      <span>Version: 2.0.3</span>
      <Grip />
    </EliteStatus>
  </Window>
);

/* company setup window */

const MenuBar = styled.nav`
  height: 22px;
  flex: none;
  display: flex;
  align-items: center;
  gap: 13px;
  padding: 4px 6px 0;
`;

const Toolbar = styled.div`
  height: 28px;
  flex: none;
  display: flex;
  align-items: center;
  background: ${colors.face};
  border-bottom: 1px solid ${colors.line};
  padding-left: 3px;
`;

const ToolGroup = styled.div`
  display: flex;
  align-items: center;
  height: 25px;
  gap: 9px;
  padding: 0 8px;
  border-left: 1px solid ${colors.line};
`;

const LogoSlot = styled.div`
  margin-left: auto;
  align-self: flex-end;
`;

const Tabs = styled.div`
  height: 24px;
  flex: none;
  display: flex;
  align-items: center;
  background: ${colors.face};
  padding: 1px 0 0 1px;
  font-family: ${classic};
  font-size: 11px;
`;

const Tab = styled.button`
  height: 18px;
  padding: 0 2px 0 4px;
  border-right: 2px solid #707070;
  white-space: nowrap;
  ${(p) => p.$active && "color: #9dbbd8; padding: 0 4px 4px 6px;"}
  ${(p) => p.$first && "border-right: 1px solid #fff; padding-left: 6px;"}
`;

const Body = styled.div`
  flex: 1;
  min-height: 0;
  display: flex;
  gap: 2px;
  background: ${colors.face};
  border-right: 2px solid ${colors.dark};
  border-bottom: 2px solid ${colors.dark};
  padding: 3px 3px 4px 5px;
  font-family: ${classic};
  font-size: 11px;
  line-height: 14px;
`;

const TreePane = styled.div`
  width: 337px;
  flex: none;
  display: flex;
  flex-direction: column;
  border: 2px solid ${colors.dark};
  border-color: ${colors.dark} ${colors.line} #fff ${colors.dark};
  padding: 0 2px 2px 0;
`;

const TreeTop = styled.div`
  flex: 1;
  min-height: 0;
  display: flex;
`;

const Tree = styled.ul`
  flex: 1;
  min-width: 0;
  overflow: hidden;
  display: grid;
  grid-auto-rows: 1fr;
  background: ${dots} 8px 8px / 1px 100% no-repeat #fff;
`;

const Node = styled.li`
  display: flex;
  align-items: center;
  white-space: nowrap;
  min-height: 0;
  padding-left: ${(p) => [4, 24, 48][p.$level]}px;
  ${(p) => p.$level === 2 && css`
    background: ${dots} 47px 0 / 1px 100% no-repeat;
  `}
`;

const NodeLabel = styled.span`
  margin-left: 4px;
  padding: 0 1px;
  ${(p) => p.$selected && css`
    background: ${colors.accent};
    color: #fff;
    outline: 1px dotted #d08030;
    outline-offset: -1px;
  `}
`;

const modules = [
  "Accounts Payable",
  "Accounts Receivable",
  "Bank Book",
  "Financial Explorer",
  "General Ledger",
  "Inspections",
  "Low Income Public Housing",
  "Operating System",
];

const settings = [
  "58 Transmission File Output Directory Path",
  "59 Transmission File Output Directory Path",
  "Address Validation Method",
  "Age of Majority",
  "Allow duplicate RAR Request Type for member",
  "Allow duplicate TaxID/SSN when entering entity",
  "Allow SA Users To Login When System Not Available",
  "Allow users to delete previously saved notes?",
  "Allow users to edit previously saved notes?",
  "Attachments: Central File Location",
  "Attachments: Store in central location",
  "Census Tract Mask for Address Validation",
  "Combine Waiting List Status Log Method",
  "Combine Working Certs Method",
  'Default Notes Tracking to "Show All"',
  "Disable Logging Triggers",
  "Disable Login After Invalid Attempts",
];

const Pane = styled.div`
  flex: 1;
  min-width: 0;
  display: flex;
  border: 1px solid ${colors.line};
  border-color: #fff ${colors.line} ${colors.line} #fff;
  padding: 0 2px 2px 2px;
`;

const InfoBox = styled.fieldset`
  flex: 1;
  min-width: 0;
  margin: 0;
  padding: 0 4px 0 0;
  border: 1px solid ${colors.line};

  legend {
    margin-left: 5px;
    padding: 0 1px;
    line-height: 11px;
  }
`;

const Fields = styled.dl`
  height: 163px;
  display: grid;
  grid-template-columns: 91px 1fr;
  grid-auto-rows: 1fr;
  column-gap: 22px;
  align-items: center;

  dt {
    text-align: right;
  }
`;

const CheckRow = styled.label`
  display: flex;
  align-items: center;
  gap: 4px;
  height: 20px;
  padding: 4px 0 0 117px;
  color: #8f8f8f;

  input {
    appearance: none;
    width: 12px;
    height: 12px;
    margin: 0;
    border: 2px solid #808080;
    border-right: 1px solid #e6e6e6;
    border-bottom: 1px solid #e6e6e6;
  }
`;

const CommentRow = styled.div`
  display: grid;
  grid-template-columns: 91px 1fr;
  column-gap: 22px;
  margin-top: 1px;

  label {
    text-align: right;
    padding-top: 4px;
  }

  textarea {
    height: 118px;
    margin: 0;
    resize: none;
    outline: 0;
    background: #fff;
    border: 2px solid #808080;
    border-right: 1px solid #e6e6e6;
    border-bottom: 1px solid #e6e6e6;
  }
`;

const StatusBar = styled.footer`
  height: 19px;
  flex: none;
  display: flex;
  align-items: flex-end;
  gap: 3px;
  background: ${colors.face};
`;

const StatusCell = styled.div`
  height: 17px;
  display: flex;
  align-items: center;
  gap: 4px;
  padding: 0 ${(p) => p.$pad || 3}px;
  border-right: 1px solid #fff;
  border-top: 1px solid ${colors.line};
  border-left: 1px solid ${colors.line};
  background: ${(p) => (p.$on ? "#d4d4d4" : "none")};
  flex: ${(p) => (p.$fill ? 1 : "none")};
  justify-content: ${(p) => (p.$fill ? "flex-end" : "flex-start")};
`;

const EmphasysLogo = () => (
  <svg width="106" height="25" viewBox="0 0 106 25" role="img" aria-label="emphasys">
    <defs>
      <linearGradient id="brand" x1="0" y1="0" x2="1" y2="0.3">
        <stop offset="0" stopColor="#164f8c" />
        <stop offset="0.7" stopColor="#3e86bd" />
        <stop offset="1" stopColor="#2e74ae" />
      </linearGradient>
      <linearGradient id="curl" x1="0" y1="0" x2="1" y2="0.4">
        <stop offset="0" stopColor="#8a8a8a" />
        <stop offset="0.4" stopColor="#fff" />
        <stop offset="1" stopColor="#6d6d6d" />
      </linearGradient>
    </defs>
    <path d="M0 0h106v25H22C20 14 12 5 0 0z" fill="url(#brand)" />
    <path d="M16 3h90v3H20z" fill="#b9d3ea" opacity="0.8" />
    <path d="M0 0c12 4 20 13 22 24C15 19 8 20 1 23z" fill="url(#curl)" />
    <path d="M54 9l7-6 7 6" fill="none" stroke="#fff" strokeWidth="2.500" />
    <text x="32" y="21" fontSize="14" fontStyle="italic" fontFamily="Liberation Sans Narrow, Open Sans Condensed, Open Sans" fill="#fff">
      <tspan fontWeight="700">empha</tspan><tspan fontWeight="400">sys</tspan>
    </text>
  </svg>
);

const fields = [
  ["Description", "Accounts Payable"],
  ["Module Code", "AP"],
  ["Release Version", "1.0"],
  ["Company Version", "1.0"],
  ["Install Date", "2/13/2007"],
  ["Last Update", "2/13/2007"],
  ["Install Key", "NQGA14AD-SPYN76FB-CCOA5BFB"],
];

const tabNames = [
  "Add Modules",
  "Communication Types",
  "Departments",
  "1099 Companies",
  "OIS Companies",
  "System Info",
  "Access Code",
];

const CompanySetup = () => (
  <Window $x={253} $y={228} $w={782} $h={568} $edge="#6f6f6f">
    <TitleBar>
      <Icon size={16}><EliteMark arrow="#222" /></Icon>
      Company Setup
      <WindowControls />
    </TitleBar>
    <MenuBar>
      {["File", "Edit", "Record", "Help"].map((name) => (
        <button key={name}>{name}</button>
      ))}
    </MenuBar>
    <Toolbar>
      <ToolGroup>
        <button aria-label="New">
          <svg width="18" height="18"><path d="M3.500 1.500h9l4 4v11h-13z" fill="#fafafa" stroke="#c4c4c4" /></svg>
        </button>
        <button aria-label="Save">
          <svg width="16" height="16">
            <path d="M1 1h14v14H1z" fill="#a3a3a3" />
            <path d="M4 1h8v6H4zM4 10h8v5H4z" fill="#ececec" />
            <path d="M6 11h2v4H6z" fill="#777" />
          </svg>
        </button>
      </ToolGroup>
      <ToolGroup>
        <button aria-label="Find">
          <svg width="16" height="16">
            <circle cx="10.500" cy="5.500" r="4.500" fill="#f4f4f4" stroke="#b3b3b3" strokeWidth="1.500" />
            <path d="M7 9l-6 6" stroke="#999" strokeWidth="2" />
          </svg>
        </button>
      </ToolGroup>
      <ToolGroup>
        <button aria-label="Undo">
          <svg width="16" height="16">
            <path d="M5 3a6 6 0 1 0 6 0" fill="none" stroke="#777" strokeWidth="2" />
            <path d="M2 2h6v6z" fill="#777" />
          </svg>
        </button>
        <button aria-label="Delete">
          <svg width="16" height="16">
            <path d="M2 3h12v2H2zM6 1h4v2H6zM3 6h10l-1 10H4z" fill="#444" />
            <path d="M6 7v7m2-7v7m2-7v7" stroke="#aaa" />
          </svg>
        </button>
      </ToolGroup>
      <ToolGroup>
        <button aria-label="Keypad">
          <svg width="16" height="13">
            <rect x="0.500" y="0.500" width="15" height="12" rx="1" fill="#bcd9ff" stroke="#1c6be0" />
            <path d="M3 3.500h5m2 0h3M3 6.500h1m1 0h1m1 0h1m1 0h1m1 0h1M3 8.500h1m1 0h1m1 0h1m1 0h1m1 0h1M3 10.500h1m1 0h1m1 0h1m1 0h1m1 0h1" stroke="#1346b0" />
          </svg>
        </button>
      </ToolGroup>
      <LogoSlot><EmphasysLogo /></LogoSlot>
    </Toolbar>
    <Tabs>
      <Tab $first>Company</Tab>
      <Tab $active>Module Maintenance</Tab>
      {tabNames.map((name) => (
        <Tab key={name}>{name}</Tab>
      ))}
    </Tabs>
    <Body>
      <TreePane>
        <TreeTop>
          <Tree>
            {modules.map((name, i) => (
              <Node key={name} $level={0}>
                <PlusBox $open={i === 7} /><Dash $w={7} /><Small name="module" />
                <NodeLabel $selected={i === 0}>{name}</NodeLabel>
              </Node>
            ))}
            <Node $level={1}>
              <PlusBox $open /><Dash $w={7} /><Small name="form" />
              <NodeLabel>Operating System</NodeLabel>
            </Node>
            {settings.map((name) => (
              <Node key={name} $level={2}>
                <Dash $w={10} /><Small name="pref" />
                <NodeLabel>{name}</NodeLabel>
              </Node>
            ))}
          </Tree>
          <VBar thumb={146} />
        </TreeTop>
        <HTrack>
          <Arrow to="left" />
          <HThumb $w={244} />
          <Arrow to="right" />
          <ArrowBox as="span" />
        </HTrack>
      </TreePane>
      <Pane>
        <InfoBox>
          <legend>Authorized Module Information</legend>
          <Fields>
            {fields.map(([label, value]) => (
              <React.Fragment key={label}>
                <dt>{label}</dt>
                <dd>{value}</dd>
              </React.Fragment>
            ))}
          </Fields>
          <CheckRow>
            <input type="checkbox" disabled />
            Allow Multiple
          </CheckRow>
          <CommentRow>
            <label htmlFor="comments">Comments</label>
            <textarea id="comments" />
          </CommentRow>
        </InfoBox>
      </Pane>
    </Body>
    <StatusBar>
      <StatusCell>
        <svg width="12" height="13"><rect width="12" height="13" fill="#111" /><rect x="2" y="2" width="8" height="9" rx="3" fill="#0f0" /></svg>
        RW
      </StatusCell>
      <StatusCell $on>
        <svg width="13" height="12">
          <path d="M0.500 0.500h12v11H0.500zM4.500 1v10M6 3.500h5M6 5.500h5M6 7.500h5M6 9.500h5M2 3.500h1M2 5.500h1M2 7.500h1M2 9.500h1" fill="none" stroke="#777" />
        </svg>
      </StatusCell>
      <StatusCell $fill $pad={1}><Grip /></StatusCell>
    </StatusBar>
  </Window>
);

/* ---------- taskbar ---------- */

const Bar = styled.footer`
  height: 40px;
  flex: none;
  display: flex;
  align-items: stretch;
  background: #000;
  color: #fff;
`;

const TaskButton = styled.button`
  width: 49px;
  display: flex;
  align-items: center;
  justify-content: center;
  ${(p) => p.$open && css`
    background: linear-gradient(#76b9ed, #76b9ed) center bottom / 40px 2px no-repeat;
  `}
  ${(p) => p.$active && css`
    background: linear-gradient(#76b9ed, #76b9ed) center bottom / 100% 2px no-repeat #333;
  `}
`;

const Tray = styled.div`
  margin-left: auto;
  display: flex;
  align-items: center;
  gap: 8px;
`;

const Clock = styled.time`
  width: 58px;
  text-align: center;
  line-height: 17px;
`;

const Notices = styled.button`
  position: relative;
  width: 22px;
  margin: 0 6px 0 7px;
  display: flex;
`;

const Badge = styled.span`
  position: absolute;
  right: -5px;
  top: 4px;
  width: 16px;
  height: 16px;
  border-radius: 50%;
  border: 1px solid #ddd;
  background: #333;
  font-size: 10px;
  line-height: 14px;
`;

const ShowDesktop = styled.button`
  width: 5px;
  align-self: stretch;
  border-left: 1px solid #555;
`;

const Taskbar = () => (
  <Bar>
    <TaskButton aria-label="Start"><FaWindows size={17} color="#fff" /></TaskButton>
    <TaskButton aria-label="Search">
      <svg width="18" height="18"><circle cx="11" cy="7" r="5.500" fill="none" stroke="#ddd" strokeWidth="1.500" /><path d="M7 11l-6 6" stroke="#ddd" strokeWidth="1.500" /></svg>
    </TaskButton>
    <TaskButton aria-label="Task View">
      <svg width="18" height="16"><path d="M1 0v3h10V0M1 16v-3h10v3M1 5.500h10v5H1zM15.500 0v16M14 5h3" fill="none" stroke="#ddd" strokeWidth="1.500" /></svg>
    </TaskButton>
    <TaskButton aria-label="Internet Explorer">
      <svg width="24" height="24" viewBox="0 0 24 24">
        <FaInternetExplorer x="2" y="2" size={21} color="#45c4f7" />
        <path d="M2 21C-1 15 12 1 20 1c3 0 2 3 1 4" fill="none" stroke="#f7c62f" strokeWidth="2" />
      </svg>
    </TaskButton>
    <TaskButton $open aria-label="File Explorer">
      <svg width="22" height="20">
        <path d="M1 1h8l2 2h10v14H1z" fill="#f7d775" />
        <path d="M1 6h20v12H1z" fill="#ffe9a0" />
        <path d="M5 11h12v8h-3v-4H8v4H5z" fill="#3aa7dd" />
      </svg>
    </TaskButton>
    <TaskButton aria-label="Firefox"><Icon size={24}><Flame /></Icon></TaskButton>
    <TaskButton aria-label="Control Panel">
      <svg width="22" height="17">
        <rect x="0.500" y="0.500" width="21" height="16" fill="#66b9f0" stroke="#bfe3fb" />
        <circle cx="6.500" cy="6.500" r="3.500" fill="#e9f6ff" />
        <path d="M6.500 6.500V3a3.500 3.500 0 0 1 3.500 3.500z" fill="#e88a2c" />
        <path d="M12 4h7M12 7h7M4 12h6m2-2h7m-7 3h7" stroke="#eaf6ff" strokeWidth="1.500" />
      </svg>
    </TaskButton>
    <TaskButton $open aria-label="Chrome"><Icon size={24}><ChromeMark /></Icon></TaskButton>
    <TaskButton aria-label="Services">
      <svg width="24" height="24" viewBox="0 0 24 24">
        <FaCog x="1" y="0" size={18} color="#dbe6f0" />
        <circle cx="10" cy="9" r="4" fill="#1f2a35" />
        <FaCog x="14" y="14" size={9} color="#b9c9d8" />
      </svg>
    </TaskButton>
    <TaskButton $open aria-label="Server Tools">
      <svg width="24" height="24">
        <circle cx="9" cy="9" r="7" fill="#2f7fd6" />
        <path d="M4 6c3-3 6 0 8 2s-2 5-4 6-5-4-4-8z" fill="#4caf50" />
        <path d="M1 1h7l3 2 1-1v6H6l2-2-3-2H1z" fill="#f2c12e" />
        <path d="M12 9l5-2v15l-5-3zM17 7l6 3v12l-6 1z" fill="#b9bec4" />
        <path d="M17 7v15m2-10h3m-3 3h3" stroke="#6b7178" />
      </svg>
    </TaskButton>
    <TaskButton $active aria-label="Elite"><Icon size={22}><EliteMark arrow="#222" /></Icon></TaskButton>
    <Tray>
      <ChevronUp size={16} strokeWidth={1.500} />
      <svg width="16" height="16">
        <circle cx="8" cy="8" r="7.500" fill="#14a04a" />
        <path d="M12 5a5 5 0 1 0 0 6" fill="none" stroke="#fff" strokeWidth="2.500" />
        <path d="M9 3l6-2-2 6z" fill="#e04b3a" />
      </svg>
      <svg width="16" height="16"><path d="M4.500 3.500h11v8h-11zM8 14.500h5M10.500 12v2M0.500 1.500h3v4h-3zM2 6v8h4" fill="none" stroke="#eee" /></svg>
      <svg width="17" height="17">
        <path d="M1.500 2.500h13v11h-13zM4 5h3v3H4zM9 5h3M9 8h3" fill="none" stroke="#eee" />
        <circle cx="12" cy="12" r="4.500" fill="#d9242b" />
        <path d="M10 10l4 4m0-4-4 4" stroke="#fff" strokeWidth="1.500" />
      </svg>
      <svg width="17" height="17">
        <path d="M1 6h3l4-4v12l-4-4H1z" fill="none" stroke="#eee" />
        <circle cx="12" cy="12" r="4.500" fill="#d9242b" />
        <path d="M10 10l4 4m0-4-4 4" stroke="#fff" strokeWidth="1.500" />
      </svg>
      <Clock>9:19 AM<br />7/30/2025</Clock>
      <Notices aria-label="Notifications">
        <svg width="18" height="17"><path d="M1 1h16v12h-5v4l-4-4H1z" fill="#fff" /><path d="M4 4h10M4 7h10M4 10h6" stroke="#000" /></svg>
        <Badge>2</Badge>
      </Notices>
      <ShowDesktop aria-label="Show desktop" />
    </Tray>
  </Bar>
);

const App = () => (
  <Screen>
    <GlobalStyle />
    <Desktop>
      <IconGrid>
        {desktopIcons.map(([name, label, linked]) => (
          <DesktopIcon key={label}>
            <Icon>
              {drawings[name]}
              {linked && <Shortcut />}
            </Icon>
            {label}
          </DesktopIcon>
        ))}
      </IconGrid>
      <LooseFile><Icon>{drawings.page}</Icon></LooseFile>
      <Explorer />
      <Elite />
      <CompanySetup />
      <Marker />
      <Banner>
        <svg width="18" height="14" aria-hidden="true">
          <path d="M13 1H4v4h7M3 4H1v5h3M7 9h7V5M15 4h2v5h-4M5 9v4h8" fill="none" stroke="#11686a" strokeWidth="1.500" />
        </svg>
        Your computer is being controlled by Colt Morgan
        <BannerTools aria-label="Remote control settings">
          <Settings size={18} />
          <ChevronDown size={13} strokeWidth={3} />
        </BannerTools>
      </Banner>
    </Desktop>
    <Taskbar />
  </Screen>
);

export default App;
